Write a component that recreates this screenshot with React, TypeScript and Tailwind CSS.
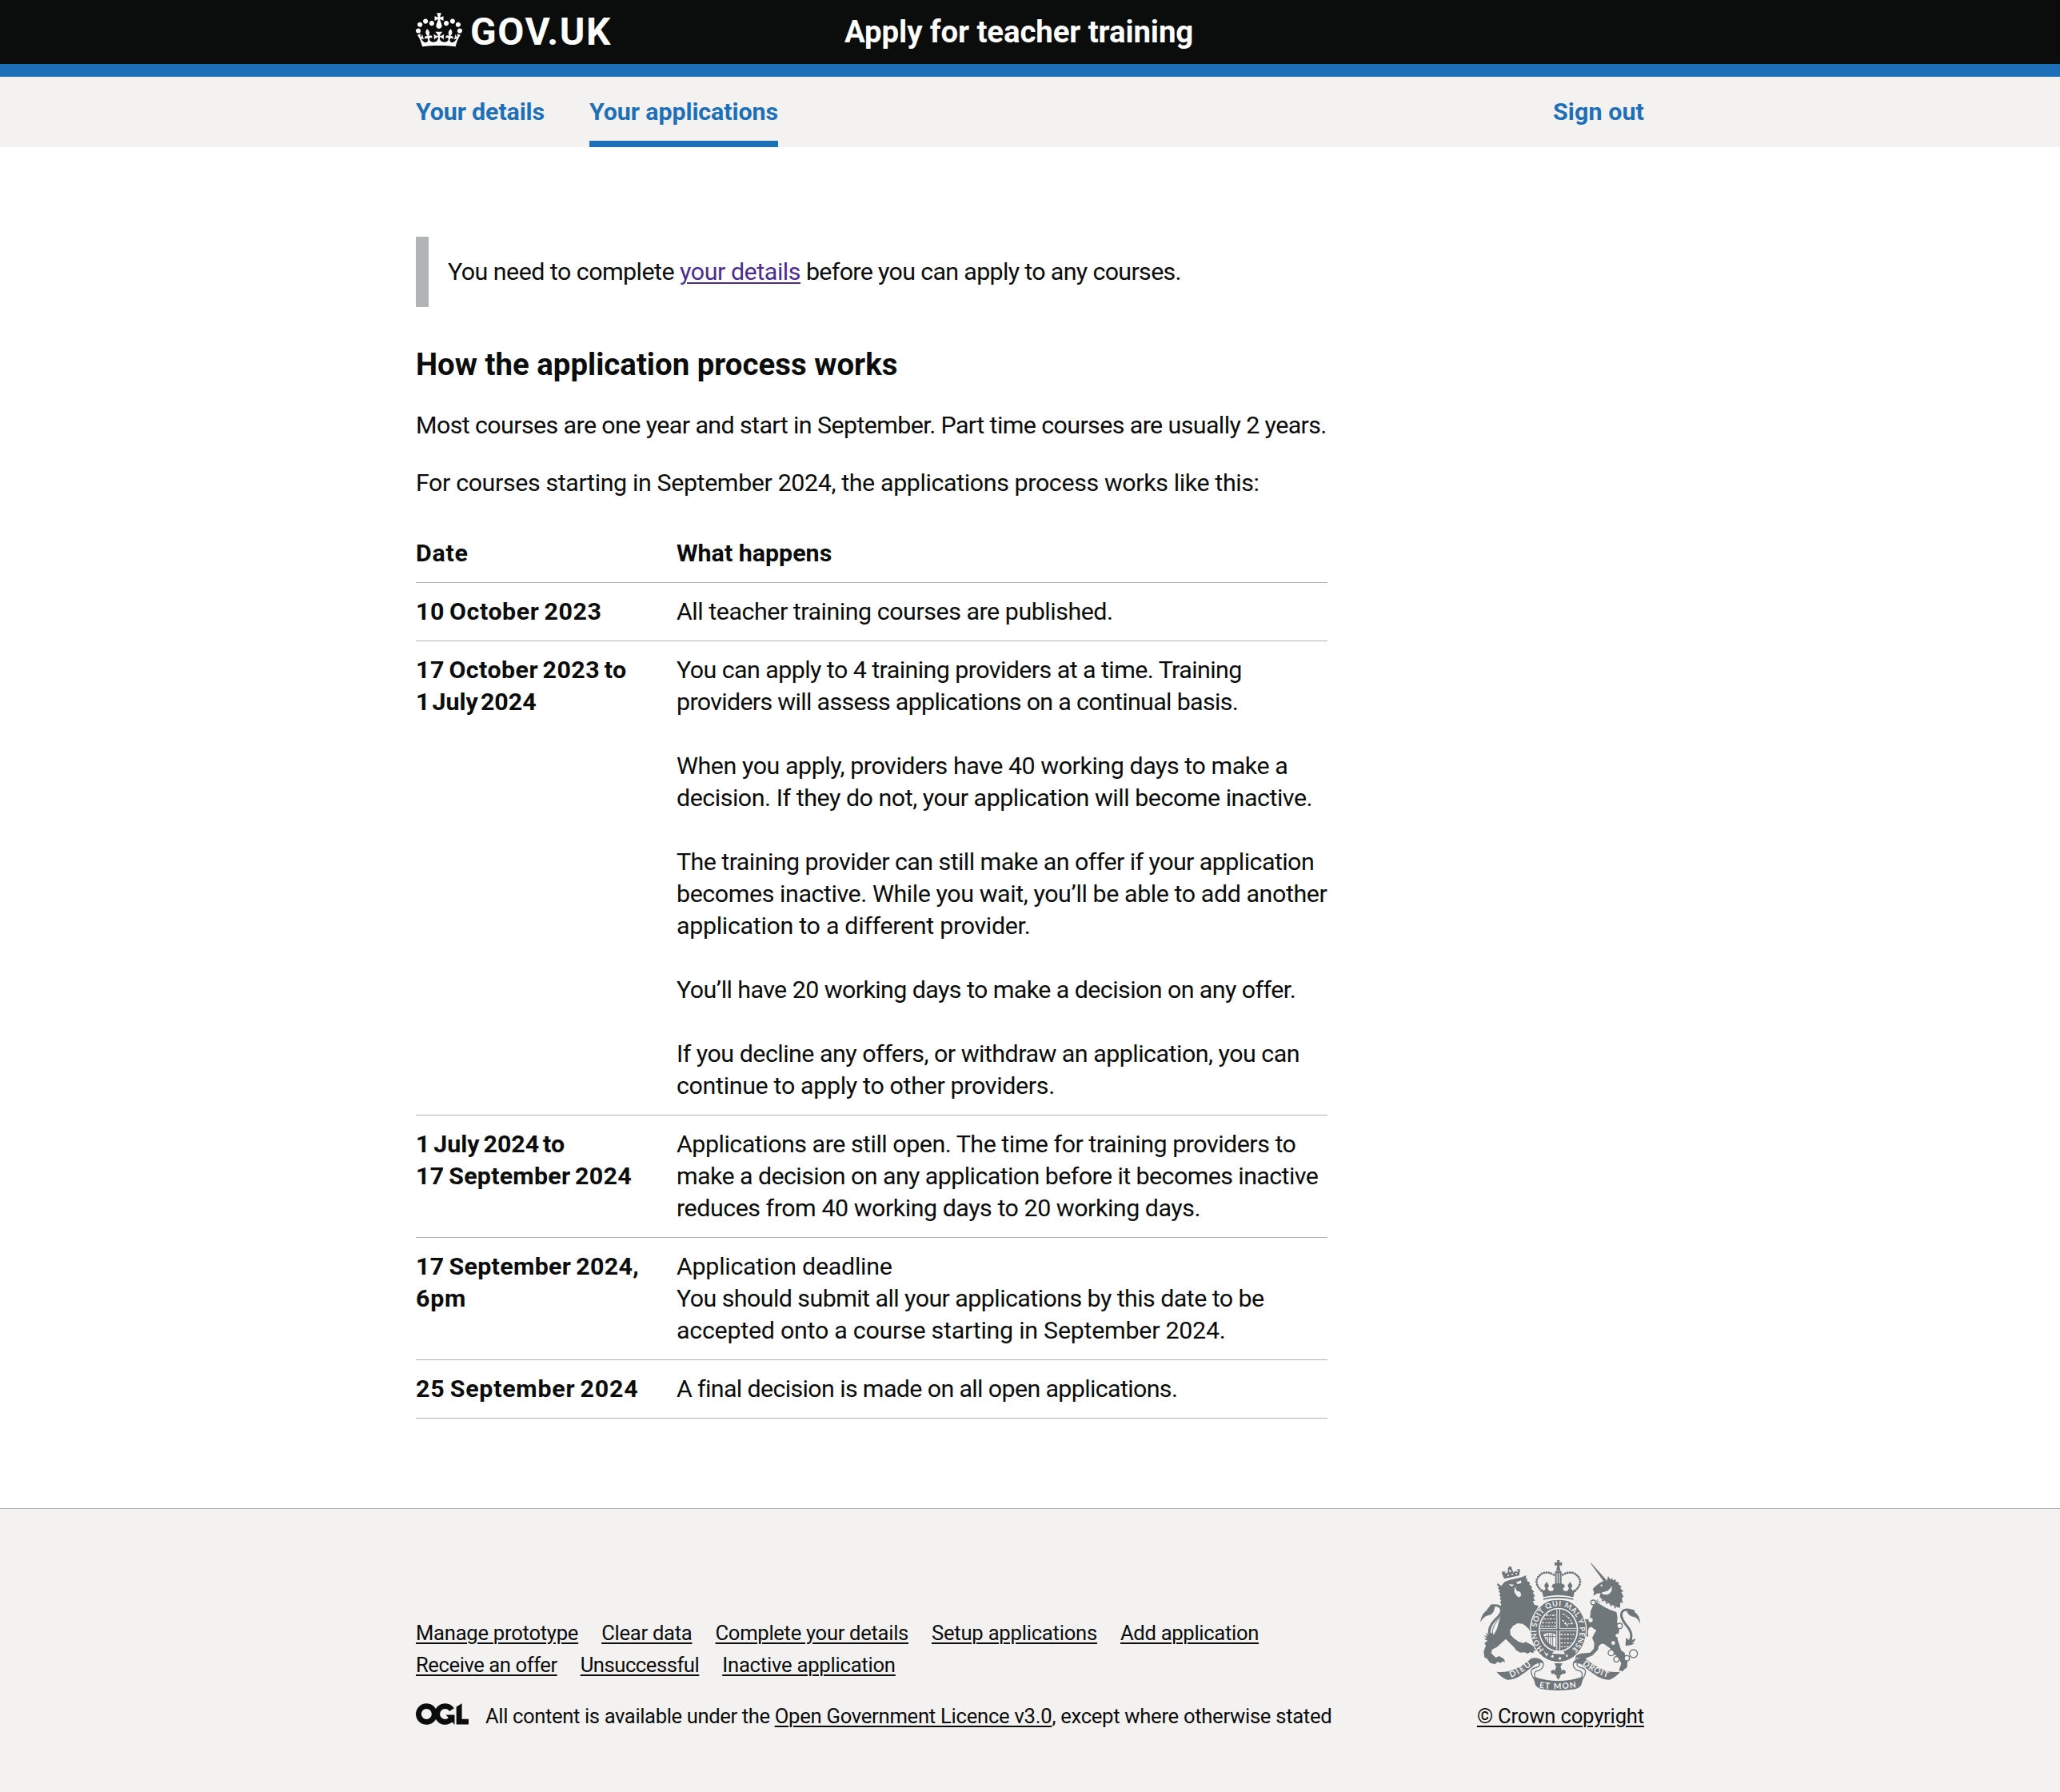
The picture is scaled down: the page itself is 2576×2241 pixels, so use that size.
import type { ReactNode } from 'react';

type Line = { text: string; fit: string };
type Row = { date: Line[]; body: Line[][] };

const rows: Row[] = [
  {
    date: [{ text: '10 October 2023', fit: 'tracking-[0.55px] [word-spacing:-2px]' }],
    body: [[{ text: 'All teacher training courses are published.', fit: 'tracking-[-0.46px]' }]],
  },
  {
    date: [
      { text: '17 October 2023 to', fit: 'tracking-[0.45px] [word-spacing:-2.4px]' },
      { text: '1 July 2024', fit: '[word-spacing:-4.5px]' },
    ],
    body: [
      [
        { text: 'You can apply to 4 training providers at a time. Training', fit: 'tracking-[-0.56px]' },
        { text: 'providers will assess applications on a continual basis.', fit: 'tracking-[-0.67px]' },
      ],
      [
        { text: 'When you apply, providers have 40 working days to make a', fit: 'tracking-[-0.44px]' },
        { text: 'decision. If they do not, your application will become inactive.', fit: 'tracking-[-0.46px]' },
      ],
      [
        { text: 'The training provider can still make an offer if your application', fit: 'tracking-[-0.55px]' },
        { text: 'becomes inactive. While you wait, you’ll be able to add another', fit: 'tracking-[-0.42px]' },
        { text: 'application to a different provider.', fit: 'tracking-[-0.3px]' },
      ],
      [{ text: 'You’ll have 20 working days to make a decision on any offer.', fit: 'tracking-[-0.57px]' }],
      [
        { text: 'If you decline any offers, or withdraw an application, you can', fit: 'tracking-[-0.5px]' },
        { text: 'continue to apply to other providers.', fit: 'tracking-[-0.33px]' },
      ],
    ],
  },
  {
    date: [
      { text: '1 July 2024 to', fit: '[word-spacing:-2.7px]' },
      { text: '17 September 2024', fit: 'tracking-[0.25px] [word-spacing:-2px]' },
    ],
    body: [
      [
        { text: 'Applications are still open. The time for training providers to', fit: 'tracking-[-0.48px]' },
        { text: 'make a decision on any application before it becomes inactive', fit: 'tracking-[-0.58px]' },
        { text: 'reduces from 40 working days to 20 working days.', fit: 'tracking-[-0.46px]' },
      ],
    ],
  },
  {
    date: [
      { text: '17 September 2024,', fit: 'tracking-[0.33px] [word-spacing:-2px]' },
      { text: '6pm', fit: 'tracking-[0.7px]' },
    ],
    body: [
      [
        { text: 'Application deadline', fit: 'tracking-[-0.26px]' },
        { text: 'You should submit all your applications by this date to be', fit: 'tracking-[-0.56px]' },
        { text: 'accepted onto a course starting in September 2024.', fit: 'tracking-[-0.26px]' },
      ],
    ],
  },
  {
    date: [{ text: '25 September 2024', fit: 'tracking-[0.75px] [word-spacing:-2px]' }],
    body: [[{ text: 'A final decision is made on all open applications.', fit: 'tracking-[-0.63px]' }]],
  },
];

const footerLinks: Line[][] = [
  [
    { text: 'Manage prototype', fit: 'tracking-[-0.25px]' },
    { text: 'Clear data', fit: 'tracking-[-0.27px]' },
    { text: 'Complete your details', fit: 'tracking-[-0.3px]' },
    { text: 'Setup applications', fit: 'tracking-[-0.22px]' },
    { text: 'Add application', fit: 'tracking-[-0.31px]' },
  ],
  [
    { text: 'Receive an offer', fit: 'tracking-[-0.42px]' },
    { text: 'Unsuccessful', fit: 'tracking-[-0.46px]' },
    { text: 'Inactive application', fit: 'tracking-[-0.22px]' },
  ],
];

function Lines({ lines }: { lines: Line[] }) {
  return (
    <>
      {lines.map((l) => (
        <span key={l.text} className={`block whitespace-nowrap ${l.fit}`}>
          {l.text}
        </span>
      ))}
    </>
  );
}

function Link({ children, className = '' }: { children: ReactNode; className?: string }) {
  return (
    <a href="#" className={`whitespace-nowrap underline decoration-2 underline-offset-3 ${className}`}>
      {children}
    </a>
  );
}

function Crown() {
  return (
    <svg viewBox="0 0 132 97" className="mb-[5px] h-[43px] w-[58px]" fill="currentColor" aria-hidden="true">
      <path d="M25 30.2c3.5 1.5 7.7-.2 9.1-3.7 1.5-3.6-.2-7.8-3.9-9.2-3.6-1.4-7.6.3-9.1 3.9-1.4 3.5.3 7.5 3.9 9zM9 39.5c3.6 1.5 7.8-.2 9.2-3.7 1.5-3.6-.2-7.8-3.9-9.1-3.6-1.5-7.6.2-9.1 3.8-1.4 3.5.3 7.5 3.8 9zM4.4 57.2c3.5 1.5 7.7-.2 9.1-3.8 1.5-3.6-.2-7.7-3.9-9.1-3.5-1.5-7.6.3-9.1 3.8-1.4 3.5.3 7.6 3.9 9.1zm38.3-21.4c3.5 1.5 7.7-.2 9.1-3.8 1.5-3.6-.2-7.7-3.9-9.1-3.6-1.5-7.6.3-9.1 3.8-1.3 3.6.4 7.7 3.9 9.1zm64.4-5.6c-3.6 1.5-7.8-.2-9.1-3.7-1.5-3.6.2-7.8 3.8-9.2 3.6-1.4 7.7.3 9.2 3.9 1.3 3.5-.4 7.5-3.9 9zm15.9 9.3c-3.6 1.5-7.7-.2-9.1-3.7-1.5-3.6.2-7.8 3.7-9.1 3.6-1.5 7.7.2 9.2 3.8 1.5 3.5-.3 7.5-3.8 9zm4.7 17.7c-3.6 1.5-7.8-.2-9.2-3.8-1.5-3.6.2-7.7 3.9-9.1 3.6-1.5 7.7.3 9.2 3.8 1.3 3.5-.4 7.6-3.9 9.1zM89.3 35.8c-3.6 1.5-7.8-.2-9.2-3.8-1.4-3.6.2-7.7 3.9-9.1 3.6-1.5 7.7.3 9.2 3.8 1.4 3.6-.3 7.7-3.9 9.1zM69.7 17.7l8.9 4.7V9.3l-8.9 2.8c-.2-.3-.5-.6-.9-.9L72.4 0H59.6l3.5 11.2c-.3.3-.6.5-.9.9l-8.8-2.8v13.1l8.8-4.7c.3.3.6.7.9.9l-5 15.4v.1c-.2.8-.4 1.6-.4 2.4 0 4.1 3.1 7.5 7 8.1h.2c.3 0 .7.1 1 .1.4 0 .7 0 1-.1h.2c4-.6 7.1-4.1 7.1-8.1 0-.8-.1-1.7-.4-2.4V34l-5.1-15.4c.4-.2.7-.6 1-.9zM66 92.8c16.9 0 32.8 1.1 47.1 3.2 4-16.9 8.9-26.7 14-33.5l-9.6-3.4c1 4.9 1.1 7.2 0 10.2-1.5-1.4-3-4.3-4.2-8.7L108.6 76c2.8-2 5-3.2 7.5-3.3-4.4 9.4-10 11.9-13.6 11.2-4.3-.8-6.3-4.6-5.6-7.9 1-4.7 5.7-5.9 8-.5 4.3-8.7-3-11.4-7.6-8.8 7.1-7.2 7.9-13.5 2.1-21.1-8 6.1-8.1 12.3-4.5 20.8-4.7-5.4-12.1-2.5-9.5 6.2 3.4-5.2 7.9-2 7.2 3.1-.6 4.3-6.4 7.8-13.5 7.2-10.3-.9-10.9-8-11.2-13.8 2.5-.5 7.1 1.8 11 7.3L80.2 60c-4.1 4.4-8 5.3-12.3 5.4 1.4-4.4 8-11.6 8-11.6H55.5s6.4 7.2 7.9 11.6c-4.2-.1-8-1-12.3-5.4l1.4 16.4c3.9-5.5 8.5-7.7 10.9-7.3-.3 5.8-.9 12.8-11.1 13.8-7.2.6-12.9-2.9-13.5-7.2-.7-5 3.8-8.3 7.1-3.1 2.7-8.7-4.6-11.6-9.4-6.2 3.7-8.5 3.6-14.7-4.6-20.8-5.8 7.6-5 13.9 2.2 21.1-4.7-2.6-11.9.1-7.7 8.8 2.3-5.5 7.1-4.2 8.1.5.7 3.3-1.3 7.1-5.7 7.9-3.5.7-9-1.8-13.5-11.2 2.5.1 4.7 1.3 7.5 3.3l-4.7-15.4c-1.2 4.4-2.7 7.2-4.3 8.7-1.1-3-.9-5.3 0-10.2l-9.5 3.4c5 6.9 9.9 16.7 14 33.5 14.8-2.1 30.8-3.2 47.7-3.2z" />
    </svg>
  );
}

function OglLogo() {
  return (
    <svg viewBox="0 0 483.2 195.7" className="h-[27px] w-[66px]" fill="currentColor" aria-hidden="true">
      <path d="M421.5 142.8V.1l-50.7 32.3v161.1h112.4v-50.7zm-122.3-9.6A47.12 47.12 0 0 1 221 97.8c0-26 21.1-47.1 47.1-47.1 16.7 0 31.4 8.7 39.7 21.8l42.7-27.2A97.63 97.63 0 0 0 268.1 0c-36.5 0-68.3 20.1-85.1 49.7A98 98 0 0 0 97.8 0C43.9 0 0 43.9 0 97.8s43.9 97.8 97.8 97.8c36.5 0 68.3-20.1 85.1-49.7a97.76 97.76 0 0 0 149.6 25.4l19.4 22.2h3v-87.8h-80l24.3 27.5zM97.8 145c-26 0-47.1-21.1-47.1-47.1s21.1-47.1 47.1-47.1 47.1 21.1 47.1 47.1S123.8 145 97.8 145" />
    </svg>
  );
}

/* Royal coat of arms: lion, unicorn, garter and shield, crown, motto ribbon. */
function Crest() {
  const ink = '#6f777b';
  const paper = '#f3f2f1';
  return (
    <svg viewBox="93 93 600 489" className="h-[163px] w-[200px]" fill={ink} aria-hidden="true">
      <defs>
        <path id="garter" d="M333 428A81 92 0 1 1 437 428" />
        <path id="ribbonL" d="M208 534Q256 514 292 482" />
        <path id="ribbonR" d="M476 484Q516 518 576 536" />
        <path id="ribbonM" d="M314 572Q386 582 458 570" />
      </defs>

      {/* lion */}
      <path d="M181 134q-10 2-5 12l7 17 56-12 3-18q0-10-8-6-5 3-4 9-6-5-9-1l-3 6-5-13q-2-10-9-9-9 1-7 11l-2 12-7-7q-5-1-5 5-2-8-2-2z" />
      <path d="M202 116h6v8h-6zM199 119h12v4h-12z" />
      <g fill={paper}>
        <circle cx="190" cy="139" r="3.5" />
        <circle cx="205" cy="134" r="4" />
        <circle cx="220" cy="133" r="4" />
        <circle cx="232" cy="134" r="3" />
        <circle cx="198" cy="150" r="3" />
        <circle cx="213" cy="147" r="3" />
        <circle cx="228" cy="144" r="3" />
      </g>
      <path d="M172 190l12-15 18-7 42-10 22-8-3 11 7 1-2 8 12 8-3 6 11 10-3 6 11 12-6 3 9 14-7 2 6 15-8 1 7 14 14 3-6 20-14 17-7 20 3 14 6 2 10-4 3 20-4 20-11-4-10-4-6-14-12-11-11-8-19-2-16 9-12 16 1 18 13 13 19 14 17 4 9-4 17 9 14 9 8 16-8-2-3 10-12-4-10 6-11-5-16 1-15-9-8-11-13-13-18-18-14 13-19 17-18 9-4 14 17 17 13-6 19 11 3 14-9-6-7 7-11-4-12 9-18-6-10-15-10-5-3-22 8-22-5-10 12-9 13-3 8-15 14-27 9-33 8-25 3-12-6-16 2-6-5-6 5-8-6-5 4-7-6-8 5-5-7-9 5-6-8-4 4-8-8-6 6-6-9-5z" />
      <path d="M199 183l21 2-9 7zM228 176l18-7 1 10-14 4zM222 192l9 17 12 3 4 14-9 7-9-7-8-14z" fill={paper} />
      <g fill="none" stroke={ink} strokeWidth="9" strokeLinecap="round">
        <path d="M134 264Q174 258 172 284 170 298 150 316 112 356 136 386" />
        <path d="M148 388Q124 362 158 318 186 292 166 270" strokeWidth="3" />
      </g>
      <path d="M93 326q4-30 24-44 8-20 32-22-2 36-24 40-18 2-32 26z" />
      <path d="M106 374l14 6-6-14 18 10-4-14 26 16-6 20q-28 2-40-11l10 0z" />

      {/* unicorn */}
      <path d="M505 103l7 4 54 60-9 7z" />
      <path d="M520 214l-5-12 8-9 13-11 15-9 18-5 4-15 8 13 10-6-2 9 14-3-3 7 14 4-3 6 13 10-6 4 12 14-8 2 9 18-7 3 4 20-10-2 0 18-14 10-20-9-30-13-26-12 12-13 5-16-15 2-13 8z" />
      <g fill={paper}>
        <circle cx="548" cy="188" r="3.5" />
        <path d="M550 214q30-4 36-24 4 20-8 28-10 8-28 2z" />
        <path d="M540 232q32 26 75 40l-5 14q-44-14-78-42z" />
      </g>
      <path d="M546 240l6 10 6-6zM562 248l4 11 7-5zM578 256l4 11 7-6zM594 264l4 11 6-6z" />
      <path d="M524 246q36 28 80 42l4 22-2 16 10 16-4 28-4 20 14 42 12 8 7 22 4 14-1 20-12 8-3 6-16-3 9-26-10-23-19-13-14-22-22-16-10 0-10 9-2 13-21 22-29 12-29-3-8 6 5-16 18-7 34-3 14-14 2-22-8-19 10-20 6-8-21-14-8 6-3 12 1 19-13-2-18-18-10-5-3-10 14 6 9 0-7-18-9-15-15-13-20 2-12-8 8-8 13-4 19 2 25 23 18 4 8-7 2-24z" />
      <path d="M668 284Q624 268 622 300 624 318 648 346 668 374 654 398" fill="none" stroke={ink} strokeWidth="9" strokeLinecap="round" />
      <path d="M693 332q-8-22-24-26-24-4-28-28 22-2 34 12 18 12 18 42z" />
      <path d="M640 384l-2 30q18 2 34-8l-9-2q12-8 12-18l-13 8-2-14-10 12z" />
      <g stroke={ink} strokeWidth="4" fill={paper}>
        <circle cx="616" cy="340" r="10" />
        <circle cx="584" cy="441" r="11" />
        <circle cx="604" cy="465" r="10" />
        <circle cx="643" cy="461" r="10" />
        <circle cx="668" cy="444" r="15" />
        <circle cx="517" cy="252" r="9" />
      </g>
      <g fill={paper}>
        <circle cx="608" cy="376" r="7" />
        <circle cx="592" cy="404" r="7" />
        <circle cx="507" cy="318" r="8" />
      </g>

      {/* garter and shield */}
      <ellipse cx="386" cy="357" rx="107" ry="122" fill={paper} />
      <ellipse cx="386" cy="357" rx="103" ry="118" />
      <text fontFamily="Lato, sans-serif" fontWeight="700" fontSize="28" fill={paper}>
        <textPath href="#garter" textLength="430">HONI SOIT QUI MAL Y PENSE</textPath>
      </text>
      <ellipse cx="386" cy="355" rx="74" ry="83" fill={paper} />
      <ellipse cx="386" cy="355" rx="69" ry="78" />
      <g stroke={paper} strokeWidth="4" strokeDasharray="9 5 5 4" fill="none">
        <path d="M340 300h38M330 314h48M324 328h54M322 341h56M394 372h52M394 388h48M394 404h42M394 418h30" />
        <path d="M402 294q30 14 38 44M400 318q16 8 20 24M408 332h38" />
      </g>
      <path d="M330 372q24-12 46 0v48q-34-10-46-48z" fill={paper} />
      <path d="M342 372v28M349 368v42M357 368v48M365 368v50M334 380h42" fill="none" stroke={ink} strokeWidth="3" />
      <path d="M379 278h14v70h62v11h-62v72h-14v-72h-62v-11h62z" fill={paper} />
      <path d="M382 278h8v72h65v7h-65v75h-8v-75h-65v-7h65z" />
      <path d="M338 424q48 34 98-2l8 20q-20 30-58 33-30-2-50-22z" />
      <g fill={paper}>
        <path d="M370 436h36l6 10-50-2zM330 430l10 14 10-3-9 14z" />
        <circle cx="364" cy="454" r="5" />
        <circle cx="392" cy="462" r="5" />
        <circle cx="418" cy="452" r="4" />
      </g>

      {/* crown */}
      <path d="M318 228q68-20 136 0l-8 22q-60-16-120 0z" fill={paper} />
      <path d="M322 200l8 32q56-15 112 0l8-32-10 8-6-8 5-12-9-14-9 14 5 12-8 10-12-2-3-10 8-4-4-10-21-6-21 6-4 10 8 4-3 10-12 2-8-10 5-12-9-14-9 14 5 12-6 8z" />
      <path d="M330 237q56-13 112 0v5q-56-13-112 0z" />
      <g fill="none" stroke={ink} strokeLinecap="round" strokeWidth="9" strokeDasharray="0 9.5">
        <path d="M322 208Q296 180 308 160 330 126 370 148" />
        <path d="M450 208Q476 180 464 160 442 126 402 148" />
      </g>
      <path d="M374 134h24v50h-24zM381 93h10l-1 8h10v12h-10l4 20h-16l4-20h-10v-12h10z" />
      <path d="M380 142h3v38h-3zM389 142h3v38h-3z" fill={paper} />

      {/* ribbon */}
      <g stroke={ink} strokeWidth="4" fill={paper}>
        <path d="M288 470q42-10 42 16-2 18-22 22-16 4-10 22l4 10-4 4q-14-20-14-34 0-8 12-12 20-4 20-14-2-8-14-6-14 2-24 12z" />
        <path d="M484 470q-42-10-42 16 2 18 22 22 16 4 10 22l-4 10 4 4q14-20 14-34 0-8-12-12-20-4-20-14 2-8 14-6 14 2 24 12z" />
      </g>
      <path d="M154 512q40 4 74-12 36-18 56-38l14-2q26 0 32 20-22-6-40 12-26 22-52 38-22 12-44 12-24-10-40-30z" />
      <path d="M618 512q-40 4-74-12-36-18-56-38l-14-2q-26 0-32 20 22-6 40 12 26 22 52 38 22 12 44 12 24-10 40-30z" />
      <path d="M294 530q46 16 92 16t92-16q0 14-6 32-6 10-22 15-64 10-128 0-16-5-22-15-6-18-6-32z" />
      <g fontFamily="Lato, sans-serif" fontWeight="700" fontSize="31" fill={paper}>
        <text>
          <textPath href="#ribbonL" textLength="90">DIEU</textPath>
        </text>
        <text>
          <textPath href="#ribbonR" textLength="108">DROIT</textPath>
        </text>
        <text>
          <textPath href="#ribbonM" textLength="140">ET MON</textPath>
        </text>
      </g>
      <path d="M371 480h30l-7 14q6 6 3 14 14-8 17 4-2 12-12 6-4 8-11 8l3 4-8 12-8-12 3-4q-8 0-11-8-10 6-12-6 3-12 17-4-3-8 3-14z" />
    </svg>
  );
}

export default function App() {
  return (
    <div className="flex min-h-[2241px] flex-col bg-[#f3f2f1] font-['Roboto','Liberation_Sans',sans-serif] text-[30.4px] leading-10 text-[#0b0c0c]">
      <header className="border-b-16 border-[#1d70b8] bg-[#0b0c0c] text-white">
        <div className="mx-auto flex h-20 w-[1536px] items-center">
          <a href="#" className="flex w-[536px] items-center gap-2.5">
            <Crown />
            <span className="text-[48px] leading-none font-bold tracking-[1.6px]">GOV.UK</span>
          </a>
          <a href="#" className="text-[38.4px] leading-[48px] font-bold tracking-[-0.1px]">
            Apply for teacher training
          </a>
        </div>
      </header>

      <nav className="bg-[#f3f2f1] font-bold text-[#1d70b8]">
        <div className="mx-auto flex h-22 w-[1536px] items-stretch">
          <a href="#" className="mr-14 flex w-[161px] items-center tracking-[-0.12px] whitespace-nowrap">
            Your details
          </a>
          <a
            href="#"
            className="flex w-[236px] items-center border-b-8 border-[#1d70b8] pt-2 tracking-[-0.09px] whitespace-nowrap"
          >
            Your applications
          </a>
          <a href="#" className="ml-auto flex items-center tracking-[0.1px]">
            Sign out
          </a>
        </div>
      </nav>

      <main className="bg-white pt-28 pb-28">
        <div className="mx-auto w-[1536px]">
          <div className="w-[1140px]">
            <div className="mb-12 border-l-16 border-[#b1b4b6] p-6 whitespace-nowrap">
              <span className="tracking-[-0.53px]">You need to complete </span>
              <Link className="tracking-[-0.44px] text-[#4c2c92]">your details</Link>
              <span className="tracking-[-0.66px]"> before you can apply to any courses.</span>
            </div>
            <h2 className="mb-8 text-[38.4px] leading-[48px] font-bold">How the application process works</h2>
            <p className="mb-8 tracking-[-0.6px] whitespace-nowrap">
              Most courses are one year and start in September. Part time courses are usually 2 years.
            </p>
            <p className="mb-8 tracking-[-0.38px] whitespace-nowrap">
              For courses starting in September 2024, the applications process works like this:
            </p>

            <div role="table">
              <div role="row" className="grid grid-cols-[326px_814px] border-b border-[#b1b4b6] py-4 font-bold">
                <div role="columnheader" className="tracking-[0.7px]">Date</div>
                <div role="columnheader">What happens</div>
              </div>
              {rows.map((row) => (
                <div
                  key={row.date[0].text}
                  role="row"
                  className="grid grid-cols-[326px_814px] border-b border-[#b1b4b6] py-4"
                >
                  <div role="rowheader" className="font-bold">
                    <Lines lines={row.date} />
                  </div>
                  <div role="cell" className="flex flex-col gap-10">
                    {row.body.map((para) => (
                      <p key={para[0].text}>
                        <Lines lines={para} />
                      </p>
                    ))}
                  </div>
                </div>
              ))}
            </div>
          </div>
        </div>
      </main>

      <footer className="border-t border-[#b1b4b6] pt-16 text-[25.6px] leading-8">
        <div className="mx-auto flex w-[1536px] items-end justify-between">
          <div>
            <ul className="mb-8 flex flex-col gap-2">
              {footerLinks.map((group) => (
                <li key={group[0].text} className="flex gap-[29px]">
                  {group.map((l) => (
                    <Link key={l.text} className={l.fit}>
                      {l.text}
                    </Link>
                  ))}
                </li>
              ))}
            </ul>
            <div className="flex items-start gap-[21px]">
              <OglLogo />
              <p className="whitespace-nowrap">
                <span className="tracking-[-0.37px]">All content is available under the </span>
                <Link className="tracking-[-0.25px]">Open Government Licence v3.0</Link>
                <span className="tracking-[-0.28px]">, except where otherwise stated</span>
              </p>
            </div>
          </div>
          <div className="flex flex-col items-center gap-4">
            <Crest />
            <Link className="tracking-[-0.17px]">© Crown copyright</Link>
          </div>
        </div>
      </footer>
    </div>
  );
}
